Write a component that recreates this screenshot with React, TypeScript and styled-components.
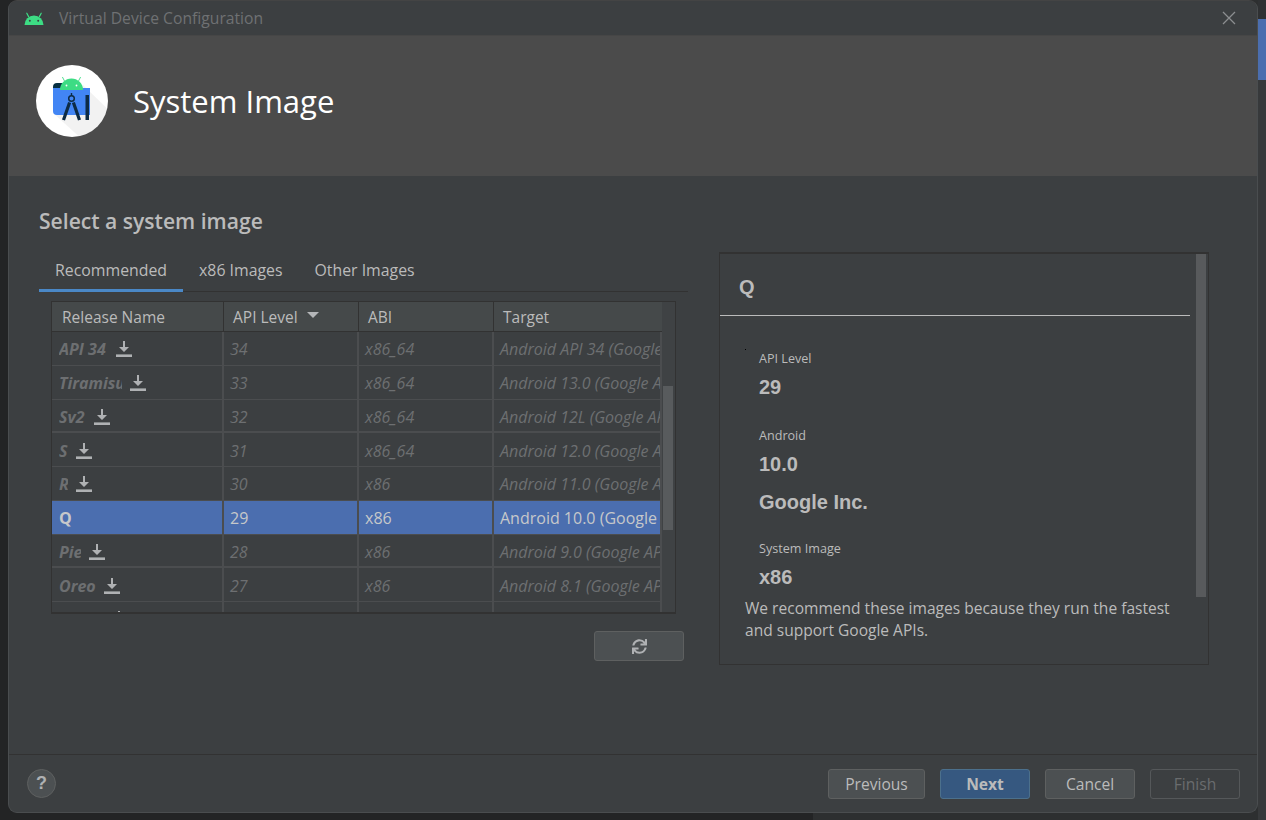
import { FaSync } from 'react-icons/fa';
import styled, { createGlobalStyle } from 'styled-components';

const GlobalStyle = createGlobalStyle`
  html, body {
    margin: 0;
    padding: 0;
    background: #232425;
    overflow: hidden;
  }
  * {
    box-sizing: border-box;
  }
`;

const UI_FONT = `'Open Sans', 'Noto Sans', sans-serif`;
const ARIAL = `'Liberation Sans', Arial, sans-serif`;

const SDesk = styled.div`
  width: 1266px;
  height: 820px;
  padding-left: 8px;
  display: flex;
  align-items: flex-start;
  font-family: ${UI_FONT};
  background: linear-gradient(90deg, #232425 813px, #2d2f30 813px);
`;

const SWindow = styled.div`
  width: 1250px;
  height: 813px;
  display: flex;
  flex-direction: column;
  background: #3c3f41;
  border: 1px solid #4a4d4f;
  border-top-color: #444;
  border-radius: 9px;
  overflow: hidden;
`;

const SEdge = styled.div`
  width: 8px;
  height: 820px;
  display: flex;
  flex-direction: column;
  background: #37393b;
`;

const SEdgeTop = styled.div`
  height: 19px;
  background: #2f3133;
`;

const SEdgeBlue = styled.div`
  height: 61px;
  background: #4b6eaf;
`;

const STitleBar = styled.div`
  height: 34px;
  flex: none;
  display: flex;
  align-items: center;
  padding: 0 21px 0 15px;
  gap: 15px;
  background: #3c3f41;
`;

const STitle = styled.span`
  flex: 1;
  font-size: 15.7px;
  color: #6f7173;
`;

const SBanner = styled.div`
  height: 141px;
  flex: none;
  display: flex;
  align-items: center;
  padding: 0 0 10px 27px;
  gap: 25px;
  background: #4b4b4b;
  border-top: 1px solid #464646;
`;

const SBannerTitle = styled.h1`
  margin: 0;
  font-size: 31px;
  font-weight: 400;
  color: #ffffff;
`;

const SBody = styled.div`
  flex: 1;
  padding: 31px 0 0 30px;
`;

const SHeading = styled.h2`
  margin: 0;
  height: 45px;
  font-size: 21.1px;
  line-height: 28px;
  font-weight: 600;
  color: #bbbbbb;
`;

const SColumns = styled.div`
  display: flex;
  gap: 31px;
`;

const SLeft = styled.div`
  width: 649px;
  display: flex;
  flex-direction: column;
`;

const STabs = styled.div`
  height: 40px;
  display: flex;
  border-bottom: 1px solid #323232;
`;

const STab = styled.div<{ $active?: boolean }>`
  height: 40px;
  padding: 5px 16px 0;
  font-size: 15.85px;
  line-height: 26px;
  color: #bbbbbb;
  border-bottom: 3px solid ${({ $active }) => ($active ? '#4a88c7' : 'transparent')};
`;

const STable = styled.div`
  width: 625px;
  height: 313px;
  margin: 9px 0 0 12px;
  display: flex;
  background: #3c3f41;
  border: 1px solid #323232;
  border-bottom-width: 2px;
`;

const SGrid = styled.div`
  width: 610px;
  display: flex;
  flex-direction: column;
`;

const SHeadRow = styled.div`
  height: 30px;
  flex: none;
  display: grid;
  grid-template-columns: 172px 135px 135px 168px;
  background: #45494a;
  border-bottom: 1px solid #323232;
`;

const SHeadCell = styled.div<{ $first?: boolean }>`
  padding-left: ${({ $first }) => ($first ? 10 : 9)}px;
  display: flex;
  align-items: center;
  gap: 9px;
  font-size: 15.5px;
  color: #bbbbbb;
  &:not(:last-child) {
    border-right: 1px solid #323232;
  }
`;

const SSortCaret = styled.i`
  width: 0;
  height: 0;
  margin-top: -3px;
  border-left: 6px solid transparent;
  border-right: 6px solid transparent;
  border-top: 6px solid #b4b6b8;
`;

const SRows = styled.div`
  flex: 1;
  overflow: hidden;
`;

const SRow = styled.div<{ $selected?: boolean; $thick?: boolean }>`
  height: 33.75px;
  display: grid;
  grid-template-columns: 172px 135px 135px 168px;
  font-size: 16px;
  font-style: ${({ $selected }) => ($selected ? 'normal' : 'italic')};
  color: ${({ $selected }) => ($selected ? '#c6c8ca' : '#6d6f71')};
  background: ${({ $selected }) => ($selected ? '#4b6eaf' : 'transparent')};
  border-bottom: ${({ $thick }) => ($thick ? 2 : 1)}px solid #4b4d4f;
`;

const SCell = styled.div<{ $thick?: boolean }>`
  min-width: 0;
  padding-left: 6px;
  padding-top: ${({ $thick }) => ($thick ? 3 : 2)}px;
  display: flex;
  align-items: center;
  overflow: hidden;
  white-space: nowrap;
  border-right: 2px solid #4b4d4f;
`;

const SNameCell = styled(SCell)`
  padding-left: 7px;
  gap: 8px;
`;

const SName = styled.span<{ $width: number }>`
  width: ${({ $width }) => $width}px;
  flex: none;
  overflow: hidden;
  font-weight: 700;
`;

const STrack = styled.div`
  width: 13px;
  padding-left: 1px;
  background: #3f4244;
`;

const SThumb = styled.div`
  width: 10px;
  height: 144px;
  margin-top: 84px;
  background: #585b5d;
`;

const SRefreshBar = styled.div`
  margin: 17px 4px 0 0;
  display: flex;
  justify-content: flex-end;
`;

const SButton = styled.button<{ $variant?: 'primary' | 'disabled'; $width: number }>`
  width: ${({ $width }) => $width}px;
  height: 30px;
  padding: 1px 0 0;
  display: flex;
  align-items: center;
  justify-content: center;
  font-family: ${UI_FONT};
  font-size: 15.6px;
  font-weight: ${({ $variant }) => ($variant === 'primary' ? 700 : 400)};
  color: ${({ $variant }) => ($variant === 'disabled' ? '#6a6c6e' : '#bbbbbb')};
  background: ${({ $variant }) =>
    $variant === 'primary' ? '#365880' : $variant === 'disabled' ? 'transparent' : '#4c5052'};
  border: 1px solid
    ${({ $variant }) =>
      $variant === 'primary' ? '#4c708c' : $variant === 'disabled' ? '#55585a' : '#5e6060'};
  border-radius: 3px;
`;

const SPanel = styled.div`
  position: relative;
  width: 490px;
  height: 413px;
  border: 1px solid #323232;
  border-top-width: 2px;
`;

const SPanelScroll = styled.div`
  position: absolute;
  top: 0;
  right: 2px;
  width: 10px;
  height: 343px;
  background: #585a5c;
`;

const SSpeck = styled.i`
  position: absolute;
  top: 95px;
  left: 25px;
  width: 1px;
  height: 1px;
  background: #000000;
`;

const SPanelHead = styled.div`
  width: 470px;
  height: 62px;
  padding: 21px 0 0 19px;
  font-family: ${ARIAL};
  font-size: 20px;
  line-height: 24px;
  font-weight: 700;
  color: #bbbbbb;
  border-bottom: 1px solid #bbbbbb;
`;

const SDetails = styled.div`
  padding-left: 39px;
`;

const SField = styled.div<{ $top: number }>`
  margin-top: ${({ $top }) => $top}px;
`;

const SLabel = styled.div`
  font-size: 12.6px;
  line-height: 16px;
  color: #bbbbbb;
`;

const SValue = styled.div<{ $top: number }>`
  margin-top: ${({ $top }) => $top}px;
  font-family: ${ARIAL};
  font-size: 20px;
  line-height: 24px;
  font-weight: 700;
  color: #bbbbbb;
`;

const SDescription = styled.p`
  margin: 8px 0 0;
  padding-left: 25px;
  font-size: 15.55px;
  line-height: 22px;
  color: #bbbbbb;
`;

const SFooter = styled.div`
  height: 58px;
  flex: none;
  display: flex;
  align-items: center;
  gap: 15px;
  padding: 0 17px 0 18px;
  border-top: 1px solid #323232;
`;

const SHelp = styled.div`
  width: 29px;
  height: 29px;
  margin-right: auto;
  display: flex;
  align-items: center;
  justify-content: center;
  font-family: ${ARIAL};
  font-size: 18px;
  font-weight: 700;
  color: #afb1b3;
  background: #4c5052;
  border: 1px solid #5e6060;
  border-radius: 50%;
`;

const AndroidMark = () => (
  <svg width='20' height='13' viewBox='0 0 20 13'>
    <path d='M0.5 13a9.5 9.5 0 0 1 19 0z' fill='#3ddc84' />
    <path d='M4.6 4.6 2.8 1.2M15.4 4.6l1.8-3.4' stroke='#3ddc84' strokeWidth='1.2' strokeLinecap='round' />
    <circle cx='5.8' cy='8.8' r='1' fill='#3c3f41' />
    <circle cx='14.2' cy='8.8' r='1' fill='#3c3f41' />
  </svg>
);

const CloseIcon = () => (
  <svg width='14' height='14' viewBox='0 0 14 14'>
    <path d='M1 1l12 12M13 1 1 13' stroke='#8c8e90' strokeWidth='1.3' />
  </svg>
);

const StudioLogo = () => (
  <svg width='72' height='72' viewBox='0 0 72 72'>
    <clipPath id='disc'>
      <circle cx='36' cy='36' r='36' />
    </clipPath>
    <circle cx='36' cy='36' r='36' fill='#ffffff' />
    <polygon points='47,20 76,48 48,76 17,48' fill='#000000' opacity='0.05' clipPath='url(#disc)' />
    <path d='M17 22a4 4 0 0 1 4-4h10v6H17z' fill='#073042' />
    <path d='M17 23h37v27H21a4 4 0 0 1-4-4z' fill='#4285f4' />
    <path d='M49.5 30H53v25h-3.5z' fill='#0d2b45' />
    <path d='M24 25a11.5 11.5 0 0 1 23 0z' fill='#3ddc84' />
    <path d='M28.5 16 26.4 12M42.5 16l2.1-4' stroke='#3ddc84' strokeWidth='0.9' />
    <circle cx='30.5' cy='20.5' r='0.9' fill='#ffffff' />
    <circle cx='40.5' cy='20.5' r='0.9' fill='#ffffff' />
    <path d='M33.6 37.5 27.5 55M37.4 37.5 43.5 55' stroke='#0d2b45' strokeWidth='3.2' />
    <path d='M35.5 28v3' stroke='#0d2b45' strokeWidth='1.4' />
    <circle cx='35.5' cy='33.5' r='2.8' fill='none' stroke='#0d2b45' strokeWidth='1.5' />
  </svg>
);

const DownloadIcon = () => (
  <svg width='16' height='16' viewBox='0 0 16 16' style={{ flex: 'none' }}>
    <path d='M7 0h2v6h4l-5 5-5-5h4z' fill='#afb1b3' />
    <rect x='0' y='13.4' width='16' height='2.6' fill='#afb1b3' />
  </svg>
);

type ImageRow = {
  name: string;
  nameWidth: number;
  api: string;
  abi: string;
  target: string;
  thick?: boolean;
  selected?: boolean;
};

const ROWS: ImageRow[] = [
  { name: 'API 34', nameWidth: 49, api: '34', abi: 'x86_64', target: 'Android API 34 (Google Play)' },
  { name: 'Tiramisu', nameWidth: 63, api: '33', abi: 'x86_64', target: 'Android 13.0 (Google APIs)' },
  { name: 'Sv2', nameWidth: 27, api: '32', abi: 'x86_64', target: 'Android 12L (Google APIs)', thick: true },
  { name: 'S', nameWidth: 9, api: '31', abi: 'x86_64', target: 'Android 12.0 (Google APIs)' },
  { name: 'R', nameWidth: 9, api: '30', abi: 'x86', target: 'Android 11.0 (Google APIs)' },
  { name: 'Q', nameWidth: 14, api: '29', abi: 'x86', target: 'Android 10.0 (Google APIs)', selected: true },
  { name: 'Pie', nameWidth: 22, api: '28', abi: 'x86', target: 'Android 9.0 (Google APIs)', thick: true },
  { name: 'Oreo', nameWidth: 37, api: '27', abi: 'x86', target: 'Android 8.1 (Google APIs)' },
  { name: 'Oreo', nameWidth: 44, api: '26', abi: 'x86', target: 'Android 8.0 (Google APIs)' },
];

const FOOTER_BUTTONS = [
  { label: 'Previous', width: 97 },
  { label: 'Next', width: 90, variant: 'primary' as const },
  { label: 'Cancel', width: 90 },
  { label: 'Finish', width: 90, variant: 'disabled' as const },
];

export default function App() {
  return (
    <SDesk>
      <GlobalStyle />
      <SWindow>
        <STitleBar>
          <AndroidMark />
          <STitle>Virtual Device Configuration</STitle>
          <CloseIcon />
        </STitleBar>
        <SBanner>
          <StudioLogo />
          <SBannerTitle>System Image</SBannerTitle>
        </SBanner>
        <SBody>
          <SHeading>Select a system image</SHeading>
          <SColumns>
            <SLeft>
              <STabs>
                <STab $active>Recommended</STab>
                <STab>x86 Images</STab>
                <STab>Other Images</STab>
              </STabs>
              <STable>
                <SGrid>
                  <SHeadRow>
                    <SHeadCell $first>Release Name</SHeadCell>
                    <SHeadCell>
                      API Level <SSortCaret />
                    </SHeadCell>
                    <SHeadCell>ABI</SHeadCell>
                    <SHeadCell>Target</SHeadCell>
                  </SHeadRow>
                  <SRows>
                    {ROWS.map((row) => (
                      <SRow key={row.api} $selected={row.selected} $thick={row.thick}>
                        <SNameCell $thick={row.thick}>
                          <SName $width={row.nameWidth}>{row.name}</SName>
                          {!row.selected && <DownloadIcon />}
                        </SNameCell>
                        <SCell $thick={row.thick}>{row.api}</SCell>
                        <SCell $thick={row.thick}>{row.abi}</SCell>
                        <SCell $thick={row.thick}>{row.target}</SCell>
                      </SRow>
                    ))}
                  </SRows>
                </SGrid>
                <STrack>
                  <SThumb />
                </STrack>
              </STable>
              <SRefreshBar>
                <SButton $width={90} aria-label='Refresh'>
                  <FaSync size={15} color='#afb1b3' />
                </SButton>
              </SRefreshBar>
            </SLeft>
            <SPanel>
              <SPanelScroll />
              <SSpeck />
              <SPanelHead>Q</SPanelHead>
              <SDetails>
                <SField $top={35}>
                  <SLabel>API Level</SLabel>
                  <SValue $top={8}>29</SValue>
                </SField>
                <SField $top={29}>
                  <SLabel>Android</SLabel>
                  <SValue $top={8}>10.0</SValue>
                  <SValue $top={14}>Google Inc.</SValue>
                </SField>
                <SField $top={27}>
                  <SLabel>System Image</SLabel>
                  <SValue $top={8}>x86</SValue>
                </SField>
              </SDetails>
              <SDescription>
                We recommend these images because they run the fastest
                <br />
                and support Google APIs.
              </SDescription>
            </SPanel>
          </SColumns>
        </SBody>
        <SFooter>
          <SHelp>?</SHelp>
          {FOOTER_BUTTONS.map((btn) => (
            <SButton key={btn.label} $width={btn.width} $variant={btn.variant}>
              {btn.label}
            </SButton>
          ))}
        </SFooter>
      </SWindow>
      <SEdge>
        <SEdgeTop />
        <SEdgeBlue />
      </SEdge>
    </SDesk>
  );
}
